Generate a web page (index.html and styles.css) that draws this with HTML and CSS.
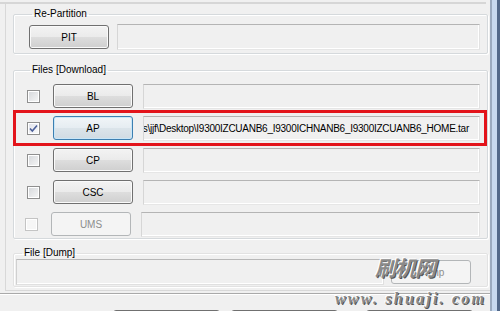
FILE: index.html
```html
<!DOCTYPE html>
<html lang="en">
<head>
    <meta charset="UTF-8">
    <title>Odin - Files</title>
    <link rel="stylesheet" href="styles.css">
</head>
<body>
    <div class="window">
        <div class="content">
            <div class="top-edge"></div>
            <div class="panel">
                <!-- Re-Partition -->
                <fieldset class="group repartition">
                    <legend>Re-Partition</legend>
                    <div class="row">
                        <div class="btn">PIT</div>
                        <div class="field"></div>
                    </div>
                </fieldset>

                <!-- Files [Download] -->
                <fieldset class="group files">
                    <legend>Files [Download]</legend>
                    <div class="row">
                        <span class="check"></span>
                        <div class="btn">BL</div>
                        <div class="field"></div>
                    </div>
                    <div class="row marked">
                        <span class="check checked">
                            <svg width="11" height="11" viewBox="0 0 11 11"><path d="M2 5.5 L4.3 8 L9 2.5" fill="none" stroke="#4b5f99" stroke-width="1.6"/></svg>
                        </span>
                        <div class="btn focus">AP</div>
                        <div class="field path"><span>C:\Users\jjf\Desktop\I9300IZCUANB6_I9300ICHNANB6_I9300IZCUANB6_HOME.tar</span></div>
                        <div class="red-box"></div>
                    </div>
                    <div class="row">
                        <span class="check"></span>
                        <div class="btn">CP</div>
                        <div class="field"></div>
                    </div>
                    <div class="row">
                        <span class="check"></span>
                        <div class="btn">CSC</div>
                        <div class="field"></div>
                    </div>
                    <div class="row">
                        <span class="check off"></span>
                        <div class="btn off">UMS</div>
                        <div class="field"></div>
                    </div>
                </fieldset>

                <!-- File [Dump] -->
                <fieldset class="group dump">
                    <legend>File [Dump]</legend>
                    <div class="row">
                        <div class="field dump-field"></div>
                        <div class="btn off">Dump</div>
                    </div>
                </fieldset>
            </div>
            <div class="bottom-bar">
                <div class="btn wide"></div>
                <div class="btn wide"></div>
                <div class="btn wide last"></div>
            </div>
            <div class="watermark">
                <div class="wm-cn">刷机网</div>
                <div class="wm-url">www. shuaji. com</div>
            </div>
        </div>
        <div class="frame"></div>
    </div>
</body>
</html>
```

FILE: styles.css
```css
body {
    margin: 0;
    background: #f0f0f0;
    font-family: "Liberation Sans", Arial, sans-serif;
    font-size: 10px;
    color: #000;
}
.window { display: flex; width: 500px; height: 311px; overflow: hidden; }
.content {
    width: 490px;
    position: relative;
    display: flex;
    flex-direction: column;
}
.frame {
    width: 10px;
    background: linear-gradient(90deg, #9aaabf 0, #9aaabf 2px, #c7d9ef 2px, #c7d9ef 7px, #52698a 7px);
}

.top-edge {
    margin-top: 2px;
    height: 2px;
    border-top: 1px solid #d6d6d6;
    border-bottom: 1px solid #d6d6d6;
    margin-right: 4px;
}
.panel {
    margin-left: 5px;
    padding: 4px 2px 3px 7px;
    border-left: 1px solid #d8d8d8;
    border-bottom: 1px solid #d8d8d8;
    display: flex;
    flex-direction: column;
}

/* group boxes */
.group {
    margin: 0;
    border: 1px solid #d5d9dc;
    box-shadow: inset 1px 1px #fff, 1px 1px #fff;
    border-radius: 2px;
    min-width: 0;
}
.group legend {
    padding: 0 2px;
    margin-left: 3px;
    line-height: 12px;
    color: #000;
}
.repartition { padding: 4px 7px 3px 15px; }
.files { margin-top: 10px; padding: 8px 7px 2px 13px; display: flex; flex-direction: column; gap: 8px; }
.dump { margin-top: 8px; padding: 0 16px 1px 2px; border-color: #e2e2e2; }
.dump legend { margin-left: 6px; }

.row { display: flex; align-items: center; position: relative; }
.files .row { height: 24px; }
.files .row .btn { margin-left: 13px; }
.files .row .field { margin-left: 10px; height: 25px; }
.repartition .field { margin-left: 8px; }

/* buttons */
.btn {
    width: 80px;
    height: 24px;
    flex: none;
    box-sizing: border-box;
    border: 1px solid #707070;
    border-radius: 3px;
    background: linear-gradient(#f3f3f3 0%, #ebebeb 48%, #dddddd 52%, #cfcfcf 100%);
    box-shadow: inset 0 0 0 1px #fafafa;
    display: flex;
    align-items: center;
    justify-content: center;
}
.btn.focus {
    border-color: #3c7fb1;
    background: linear-gradient(#f1f5f8 0%, #e6edf2 48%, #dbe4ea 52%, #d0dbe3 100%);
    box-shadow: inset 0 0 0 1px #c9e6f7;
}
.btn.off {
    border-color: #b3b6b8;
    background: #f4f4f4;
    box-shadow: none;
    color: #8d8d8d;
}

/* text fields */
.field {
    flex: 1;
    height: 26px;
    box-sizing: border-box;
    border: 1px solid;
    border-color: #b4b4b4 #e2e2e2 #e6e6e6 #d6d6d6;
    background: #f0f0f0;
    box-shadow: inset -1px -1px #fff;
}
.field.path {
    display: flex;
    justify-content: flex-end;
    align-items: center;
    overflow: hidden;
    padding-right: 10px;
    white-space: nowrap;
    letter-spacing: -0.26px;
}
.dump-field { margin-right: 7px; border-color: #b8b8b8 #e0e0e0 #e0e0e0 #d0d0d0; }

/* check boxes */
.check {
    width: 13px;
    height: 13px;
    flex: none;
    box-sizing: border-box;
    border: 1px solid #8f8f8f;
    background: linear-gradient(135deg, #d4d6da, #f7f7f7);
    box-shadow: inset 0 0 0 1px #fff;
    display: flex;
    align-items: center;
    justify-content: center;
}
.check.checked { background: linear-gradient(135deg, #dfe1ea, #fbfbfb); }
.check.off { border-color: #c4c4c4; background: #f6f6f6; margin-left: -2px; }

.red-box {
    position: absolute;
    left: -14px;
    right: -7px;
    top: -6px;
    bottom: -6px;
    border: 3px solid #e3141b;
}

/* bottom buttons */
.bottom-bar {
    margin-top: 2px;
    border-top: 1px solid #a9a9a9;
    box-shadow: inset 0 1px #fff;
    display: flex;
    padding: 16px 0 0 113px;
    gap: 11px;
}
.bottom-bar .btn { width: 107px; height: 20px; }
.bottom-bar .last { margin-left: 17px; }

/* watermark */
.watermark {
    position: absolute;
    left: 335px;
    top: 254px;
    width: 155px;
    color: #8a8a8a;
    font-style: italic;
    font-weight: bold;
    text-shadow: -1px -1px #fff, 1px 1px #555;
}
.wm-cn {
    font-family: "Noto Sans CJK SC", sans-serif;
    font-size: 21px;
    line-height: 26px;
    margin-left: 40px;
    letter-spacing: -1px;
}
.wm-url {
    font-family: "Liberation Serif", serif;
    font-size: 16px;
    line-height: 16px;
    margin-top: 11px;
    letter-spacing: 2.2px;
}
```
